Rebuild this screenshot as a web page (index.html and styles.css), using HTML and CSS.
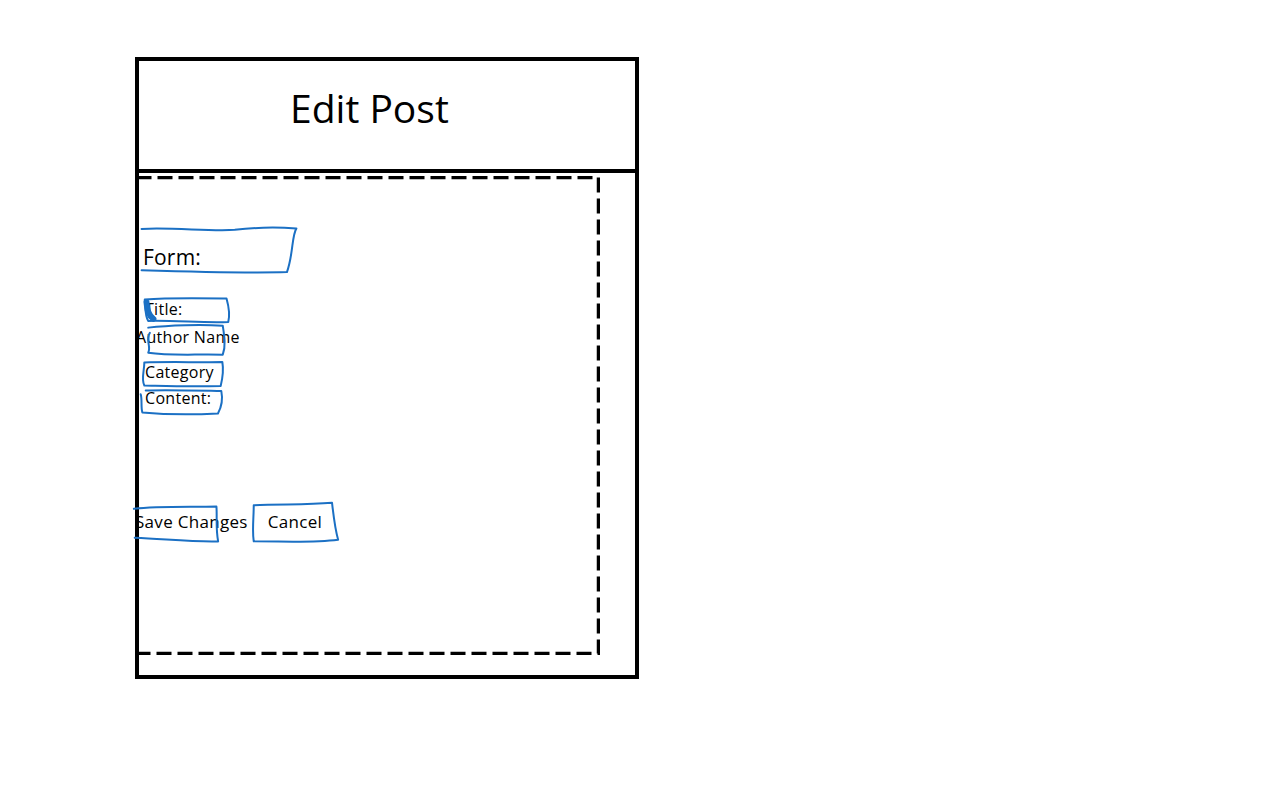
FILE: index.html
```html
<!DOCTYPE html>
<html lang="en">
	<head>
		<meta charset="utf-8" />
		<title>Edit Post</title>
		<link rel="stylesheet" href="styles.css">
	</head>
	<body>
		<div class="page">
			<div class="frame">
				<header class="header">
					<h1 class="title">Edit Post</h1>
				</header>
				<form class="form-area">
					<svg class="dash-box" viewBox="0 0 465 479" preserveAspectRatio="none">
						<path d="M1.5 1.5H463.5V477.5H1.5Z" />
					</svg>
					<div class="row row-form">
						<span class="sketch sk-form">Form:
							<svg class="scribble" viewBox="0 0 100 100" preserveAspectRatio="none">
								<path d="M1 6C20 2 45 12 60 8C70 4 85 2 99 5C96 20 97 60 93 96C70 98 40 96 1 92" />
							</svg>
						</span>
					</div>
					<div class="row row-title">
						<span class="sketch sk-title">Title:
							<svg class="scribble" viewBox="0 0 100 100" preserveAspectRatio="none">
								<path d="M2 10C30 2 60 4 96 6C98 30 100 70 98 96C70 100 40 90 6 92C2 70 3 40 2 10" />
								<path class="blob" d="M4 20C5 50 6 70 12 84" />
							</svg>
						</span>
					</div>
					<div class="row row-author">
						<span class="sketch sk-author">Author Name
							<svg class="scribble" viewBox="0 0 100 100" preserveAspectRatio="none">
								<path d="M4 14C30 6 70 4 96 8C98 40 100 70 96 96C60 94 30 100 4 90C8 70 0 50 6 30" />
							</svg>
						</span>
					</div>
					<div class="row row-category">
						<span class="sketch sk-category">Category
							<svg class="scribble" viewBox="0 0 100 100" preserveAspectRatio="none">
								<path d="M4 6C30 2 70 6 98 4C100 40 98 70 96 96C60 100 30 96 4 94C0 70 4 40 4 6" />
							</svg>
						</span>
					</div>
					<div class="row row-content">
						<span class="sketch sk-content">Content:
							<svg class="scribble" viewBox="0 0 100 100" preserveAspectRatio="none">
								<path d="M8 6C30 2 70 6 98 8C100 40 98 70 94 94C60 100 30 98 4 90C2 70 4 40 2 20" />
							</svg>
						</span>
					</div>
					<div class="row actions">
						<button type="button" class="sketch sk-save">Save Changes
							<svg class="scribble" viewBox="0 0 100 100" preserveAspectRatio="none">
								<path d="M1 10C30 2 70 6 97 4C98 30 96 60 99 96C70 98 40 90 2 86" />
							</svg>
						</button>
						<button type="button" class="sketch sk-cancel">Cancel
							<svg class="scribble" viewBox="0 0 100 100" preserveAspectRatio="none">
								<path d="M2 8C30 4 60 8 92 2C94 40 96 70 99 92C70 100 40 96 2 96C0 70 2 40 2 8" />
							</svg>
						</button>
					</div>
				</form>
			</div>
		</div>
	</body>
</html>
```

FILE: styles.css
```css
body {
	margin: 0;
	background: #fff;
	color: #000;
	font-family: "Open Sans", "DejaVu Sans", sans-serif;
}

.page {
	padding: 57px 0 0 135px;
}

.frame {
	width: 504px;
	height: 622px;
	box-sizing: border-box;
	border: 4px solid #000;
}

.header {
	height: 112px;
	box-sizing: border-box;
	border-bottom: 4px solid #000;
	padding: 23px 0 0 151px;
}

.title {
	margin: 0;
	font-size: 39px;
	font-weight: 400;
	line-height: 48px;
}

.form-area {
	position: relative;
	display: flow-root;
	width: 465px;
	height: 479px;
	margin: 3px 0 0 -4px;
	box-sizing: border-box;
}

.dash-box {
	position: absolute;
	left: 0;
	top: 0;
	width: 465px;
	height: 479px;
}

.dash-box path {
	fill: none;
	stroke: #000;
	stroke-width: 3.5;
	stroke-dasharray: 15 6;
}

.row {
	display: flex;
	font-size: 16px;
	line-height: 20px;
	letter-spacing: 0.3px;
}

.row-form {
	margin-top: 69px;
	padding-left: 8px;
	font-size: 21px;
	line-height: 24px;
	letter-spacing: 0.2px;
}

.row-title {
	margin-top: 30px;
	padding-left: 10px;
}

.row-author {
	margin-top: 8px;
	padding-left: 1px;
}

.row-category {
	margin-top: 15px;
	padding-left: 10px;
}

.row-content {
	margin-top: 6px;
	padding-left: 10px;
}

.actions {
	margin-top: 104px;
	padding-left: 0;
	gap: 20px;
	font-size: 17px;
}

.sketch {
	position: relative;
	display: inline-block;
	white-space: nowrap;
}

button.sketch {
	margin: 0;
	padding: 0;
	border: none;
	background: none;
	color: inherit;
	font: inherit;
	letter-spacing: inherit;
	line-height: 20px;
	cursor: pointer;
}

.scribble {
	position: absolute;
	overflow: visible;
	pointer-events: none;
}

.scribble path {
	fill: none;
	stroke: #1b70c4;
	stroke-width: 2;
	stroke-linejoin: round;
	stroke-linecap: round;
	vector-effect: non-scaling-stroke;
}

.scribble .blob {
	stroke-width: 6;
}

.sk-form .scribble {
	left: -3px;
	top: -19px;
	width: 158px;
	height: 48px;
}

.sk-title .scribble {
	left: -2px;
	top: -2px;
	width: 87px;
	height: 26px;
}

.sk-author .scribble {
	left: 9px;
	top: -4px;
	width: 81px;
	height: 33px;
}

.sk-category .scribble {
	left: -4px;
	top: -1px;
	width: 83px;
	height: 26px;
}

.sk-content .scribble {
	left: -6px;
	top: 1px;
	width: 84px;
	height: 26px;
}

.sk-save .scribble {
	left: -2px;
	top: -7px;
	width: 86px;
	height: 38px;
}

.sk-cancel .scribble {
	left: -16px;
	top: -10px;
	width: 87px;
	height: 41px;
}
```
